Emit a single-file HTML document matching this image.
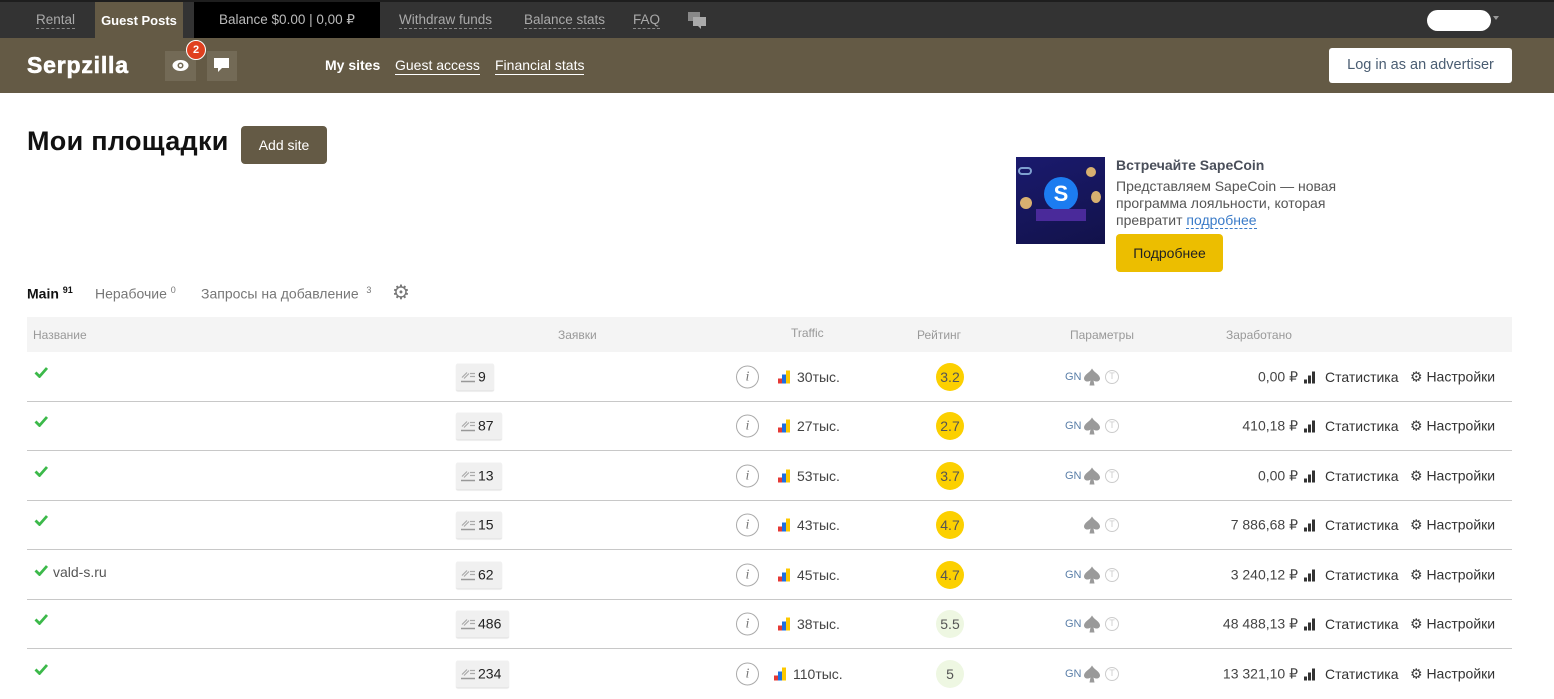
<!DOCTYPE html>
<html><head><meta charset="utf-8"><style>
*{box-sizing:border-box;margin:0;padding:0}
body{width:1554px;height:697px;overflow:hidden;background:#fff;font-family:"Liberation Sans","Noto Sans CJK SC",sans-serif;color:#333;position:relative}
.a{position:absolute;white-space:nowrap}
.top{position:absolute;left:0;top:0;width:1554px;height:38px;background:#333;border-top:2px solid #1e1e1e}
.nav{position:absolute;left:0;top:38px;width:1554px;height:55px;background:#645a45}
.tl{color:#aaa;font-size:13.5px;border-bottom:1px dashed #888;line-height:16px;top:12px}
.row{position:absolute;left:27px;width:1485px;height:50px;border-bottom:1px solid #c8c8c8}
.row .a{top:50%;transform:translateY(-50%)}
.chk{left:7px;font-size:14px;color:#555;margin-top:-3px}
.chk svg{vertical-align:1px;margin-right:4px}
.zb{left:429px;height:27px;background:#f0f0f0;border-radius:2px;font-size:14px;color:#222;padding:0 8px 0 4px;line-height:27px;box-shadow:0 1px 1px #ddd}
.zb svg{vertical-align:-2px;margin-right:2px}
.inf{left:709px;width:23px;height:23px;border:1px solid #aaa;border-radius:50%;color:#777;font-family:"Liberation Serif",serif;font-style:italic;font-size:14px;text-align:center;line-height:21px}
.tr{font-size:14px;color:#444}
.rt{left:909px;width:28px;height:28px;border-radius:50%;background:#fcd000;font-size:14px;text-align:center;line-height:28px;color:#555}
.rt.g{background:#eef7e2}
.gn{left:1038px;color:#5b7fa8;font-size:11px}
.sp{left:1057px}
.tt{left:1078px;width:14px;height:14px;border:1.5px solid #ccc;border-radius:50%;color:#ccc;font-size:9px;text-align:center;line-height:11px}
.mo{right:214px;font-size:14px;color:#444}
.st{left:1284px;font-size:14px;color:#333}
.ns{left:1383px;font-size:14px;color:#333}
</style></head><body>
<div class="top"></div>
<div class="a tl" style="left:36px">Rental</div>
<div class="a" style="left:95px;top:2px;width:88px;height:36px;background:#645a45;color:#fff;font-weight:bold;font-size:13px;line-height:37px;text-align:center">Guest Posts</div>
<div class="a" style="left:194px;top:2px;width:186px;height:36px;background:#000;color:#bbb;font-size:13.5px;line-height:36px;text-align:center">Balance $0.00 | 0,00 ₽</div>
<div class="a tl" style="left:399px">Withdraw funds</div>
<div class="a tl" style="left:524px">Balance stats</div>
<div class="a tl" style="left:633px">FAQ</div>
<svg class="a" style="left:688px;top:12px" width="20" height="17"><rect x="0" y="0" width="12" height="9" fill="#888"/><rect x="5" y="5" width="13" height="9" fill="#aaa"/><path d="M13 14v3l-3-3z" fill="#aaa"/></svg>
<div class="a" style="left:1427px;top:10px;width:64px;height:21px;background:#fff;border-radius:11px"></div>
<div class="a" style="left:1493px;top:16px;border:3px solid transparent;border-top:4px solid #999"></div>
<div class="nav"></div>
<div class="a" style="left:27px;top:52px;color:#fff;font-weight:bold;font-size:23px;letter-spacing:0.8px;-webkit-text-stroke:0.6px #fff">Serpzilla</div>
<div class="a" style="left:165px;top:51px;width:31px;height:30px;background:#736a56"></div>
<svg class="a" style="left:172px;top:59px" width="17" height="13"><ellipse cx="8.5" cy="6.5" rx="8" ry="5.5" fill="#fff"/><circle cx="8.5" cy="6.5" r="3" fill="#736a56"/><circle cx="8.5" cy="6.5" r="1.5" fill="#fff"/></svg>
<div class="a" style="left:186px;top:40px;width:20px;height:20px;border-radius:50%;background:#e0401f;border:1px solid #fff;color:#fff;font-size:11px;font-weight:bold;text-align:center;line-height:18px">2</div>
<div class="a" style="left:207px;top:51px;width:30px;height:30px;background:#736a56"></div>
<svg class="a" style="left:214px;top:58px" width="16" height="15"><rect x="0" y="0" width="15" height="10" fill="#fff"/><path d="M4 10v4l4-4z" fill="#fff"/></svg>
<div class="a" style="left:325px;top:57px;color:#fff;font-weight:bold;font-size:14px">My sites</div>
<div class="a" style="left:395px;top:57px;color:#fff;font-size:14px;border-bottom:1px solid #fff;line-height:17px">Guest access</div>
<div class="a" style="left:495px;top:57px;color:#fff;font-size:14px;border-bottom:1px solid #fff;line-height:17px">Financial stats</div>
<div class="a" style="left:1329px;top:48px;width:183px;height:35px;background:#fff;border-radius:3px;color:#4a5d72;font-size:14.5px;text-align:center;line-height:35px">Log in as an advertiser</div>

<div class="a" style="left:27px;top:126px;font-size:27px;font-weight:bold;color:#111;letter-spacing:0.3px">Мои площадки</div>
<div class="a" style="left:241px;top:126px;width:86px;height:38px;background:#645a45;border-radius:4px;color:#fff;font-size:14px;text-align:center;line-height:38px">Add site</div>

<div class="a" style="left:1016px;top:157px;width:89px;height:87px;background:linear-gradient(160deg,#1a1a6e,#12124a)">
 <div class="a" style="left:28px;top:20px;width:34px;height:34px;border-radius:50%;background:#1c7cf0;color:#fff;font-weight:bold;font-size:22px;text-align:center;line-height:34px">S</div>
 <div class="a" style="left:2px;top:10px;width:14px;height:8px;border:2px solid #7fa0d0;border-radius:4px"></div>
 <div class="a" style="left:70px;top:10px;width:10px;height:10px;border-radius:50%;background:#d8b070"></div>
 <div class="a" style="left:4px;top:40px;width:12px;height:12px;border-radius:50%;background:#d8b070"></div>
 <div class="a" style="left:75px;top:34px;width:10px;height:12px;border-radius:50%;background:#d8b070"></div>
 <div class="a" style="left:20px;top:52px;width:50px;height:12px;background:#4a2a9a"></div>
</div>
<div class="a" style="left:1116px;top:157px;font-weight:bold;font-size:14px;color:#4a4f5a">Встречайте SapeCoin</div>
<div class="a" style="left:1116px;top:178px;font-size:14px;color:#555;line-height:17px;white-space:normal;width:240px">Представляем SapeCoin — новая программа лояльности, которая превратит <span style="color:#3a7bc8;border-bottom:1px dashed #3a7bc8">подробнее</span></div>
<div class="a" style="left:1116px;top:234px;width:107px;height:38px;background:#ecbe00;border-radius:4px;font-size:14px;color:#222;text-align:center;line-height:38px">Подробнее</div>

<div class="a" style="left:27px;top:285px;font-size:14px;font-weight:bold;color:#111">Main <sup style="font-size:9px">91</sup></div>
<div class="a" style="left:95px;top:285px;font-size:14px;color:#777">Нерабочие <sup style="font-size:9px">0</sup></div>
<div class="a" style="left:201px;top:285px;font-size:14px;color:#777">Запросы на добавление &nbsp;<sup style="font-size:9px">3</sup></div>
<div class="a" style="left:392px;top:280px;font-size:20px;color:#777">⚙</div>

<div class="a" style="left:27px;top:317px;width:1485px;height:35px;background:#f4f4f4"></div>
<div class="a" style="left:33px;top:328px;font-size:12px;color:#999">Название</div>
<div class="a" style="left:558px;top:328px;font-size:12px;color:#999">Заявки</div>
<div class="a" style="left:791px;top:326px;font-size:12px;color:#999">Traffic</div>
<div class="a" style="left:917px;top:328px;font-size:12px;color:#999">Рейтинг</div>
<div class="a" style="left:1070px;top:328px;font-size:12px;color:#999">Параметры</div>
<div class="a" style="left:1226px;top:328px;font-size:12px;color:#999">Заработано</div>

<svg width="0" height="0" style="position:absolute"><defs>
<g id="z"><path d="M1 12h14" stroke="#999" stroke-width="1.5"/><path d="M2 8l5-5M4 9l5-5" stroke="#aaa" stroke-width="1.2"/><path d="M10 4h5M10 7h5" stroke="#aaa" stroke-width="1.2"/></g>
<g id="b"><rect x="0" y="8" width="4" height="5" fill="#e53935"/><rect x="4" y="4" width="4" height="9" fill="#1e6fe0"/><rect x="8" y="0" width="4" height="13" fill="#fcc800"/></g>
<g id="s"><rect x="0" y="9" width="3" height="4" fill="#333"/><rect x="4" y="5" width="3" height="8" fill="#333"/><rect x="8" y="1" width="3" height="12" fill="#333"/></g>
<path id="c" d="M1.5 6.5l4 4 7.5-8.5" fill="none" stroke="#3cb94a" stroke-width="2.8"/>
<path id="p" d="M8 0C6 4 0 6 0 10c0 3 4 4 6.5 2L5.5 17h5l-1-5c2.5 2 6.5 1 6.5-2 0-4-6-6-8-10z" fill="#9a9a9a"/>
</defs></svg>

<div class="row" style="top:352px"><span class="a chk"><svg width="15" height="12"><use href="#c"/></svg></span><span class="a zb"><svg width="16" height="14"><use href="#z"/></svg>9</span><span class="a inf">i</span><svg class="a" style="left:751px" width="13" height="13"><use href="#b"/></svg><span class="a tr" style="left:770px">30тыс.</span><span class="a rt">3.2</span><span class="a gn">GN</span><svg class="a sp" width="16" height="17"><use href="#p"/></svg><span class="a tt">T</span><span class="a mo">0,00 ₽</span><svg class="a" style="left:1277px" width="12" height="13"><use href="#s"/></svg><span class="a st" style="left:1298px">Статистика</span><span class="a ns">⚙ Настройки</span></div>
<div class="row" style="top:401px"><span class="a chk"><svg width="15" height="12"><use href="#c"/></svg></span><span class="a zb"><svg width="16" height="14"><use href="#z"/></svg>87</span><span class="a inf">i</span><svg class="a" style="left:751px" width="13" height="13"><use href="#b"/></svg><span class="a tr" style="left:770px">27тыс.</span><span class="a rt">2.7</span><span class="a gn">GN</span><svg class="a sp" width="16" height="17"><use href="#p"/></svg><span class="a tt">T</span><span class="a mo">410,18 ₽</span><svg class="a" style="left:1277px" width="12" height="13"><use href="#s"/></svg><span class="a st" style="left:1298px">Статистика</span><span class="a ns">⚙ Настройки</span></div>
<div class="row" style="top:451px"><span class="a chk"><svg width="15" height="12"><use href="#c"/></svg></span><span class="a zb"><svg width="16" height="14"><use href="#z"/></svg>13</span><span class="a inf">i</span><svg class="a" style="left:751px" width="13" height="13"><use href="#b"/></svg><span class="a tr" style="left:770px">53тыс.</span><span class="a rt">3.7</span><span class="a gn">GN</span><svg class="a sp" width="16" height="17"><use href="#p"/></svg><span class="a tt">T</span><span class="a mo">0,00 ₽</span><svg class="a" style="left:1277px" width="12" height="13"><use href="#s"/></svg><span class="a st" style="left:1298px">Статистика</span><span class="a ns">⚙ Настройки</span></div>
<div class="row" style="top:500px"><span class="a chk"><svg width="15" height="12"><use href="#c"/></svg></span><span class="a zb"><svg width="16" height="14"><use href="#z"/></svg>15</span><span class="a inf">i</span><svg class="a" style="left:751px" width="13" height="13"><use href="#b"/></svg><span class="a tr" style="left:770px">43тыс.</span><span class="a rt">4.7</span><svg class="a sp" width="16" height="17"><use href="#p"/></svg><span class="a tt">T</span><span class="a mo">7 886,68 ₽</span><svg class="a" style="left:1277px" width="12" height="13"><use href="#s"/></svg><span class="a st" style="left:1298px">Статистика</span><span class="a ns">⚙ Настройки</span></div>
<div class="row" style="top:550px"><span class="a chk"><svg width="15" height="12"><use href="#c"/></svg>vald-s.ru</span><span class="a zb"><svg width="16" height="14"><use href="#z"/></svg>62</span><span class="a inf">i</span><svg class="a" style="left:751px" width="13" height="13"><use href="#b"/></svg><span class="a tr" style="left:770px">45тыс.</span><span class="a rt">4.7</span><span class="a gn">GN</span><svg class="a sp" width="16" height="17"><use href="#p"/></svg><span class="a tt">T</span><span class="a mo">3 240,12 ₽</span><svg class="a" style="left:1277px" width="12" height="13"><use href="#s"/></svg><span class="a st" style="left:1298px">Статистика</span><span class="a ns">⚙ Настройки</span></div>
<div class="row" style="top:599px"><span class="a chk"><svg width="15" height="12"><use href="#c"/></svg></span><span class="a zb"><svg width="16" height="14"><use href="#z"/></svg>486</span><span class="a inf">i</span><svg class="a" style="left:751px" width="13" height="13"><use href="#b"/></svg><span class="a tr" style="left:770px">38тыс.</span><span class="a rt g">5.5</span><span class="a gn">GN</span><svg class="a sp" width="16" height="17"><use href="#p"/></svg><span class="a tt">T</span><span class="a mo">48 488,13 ₽</span><svg class="a" style="left:1277px" width="12" height="13"><use href="#s"/></svg><span class="a st" style="left:1298px">Статистика</span><span class="a ns">⚙ Настройки</span></div>
<div class="row" style="top:649px;border-bottom:none"><span class="a chk"><svg width="15" height="12"><use href="#c"/></svg></span><span class="a zb"><svg width="16" height="14"><use href="#z"/></svg>234</span><span class="a inf">i</span><svg class="a" style="left:747px" width="13" height="13"><use href="#b"/></svg><span class="a tr" style="left:766px">110тыс.</span><span class="a rt g">5</span><span class="a gn">GN</span><svg class="a sp" width="16" height="17"><use href="#p"/></svg><span class="a tt">T</span><span class="a mo">13 321,10 ₽</span><svg class="a" style="left:1277px" width="12" height="13"><use href="#s"/></svg><span class="a st" style="left:1298px">Статистика</span><span class="a ns">⚙ Настройки</span></div>
</body></html>
